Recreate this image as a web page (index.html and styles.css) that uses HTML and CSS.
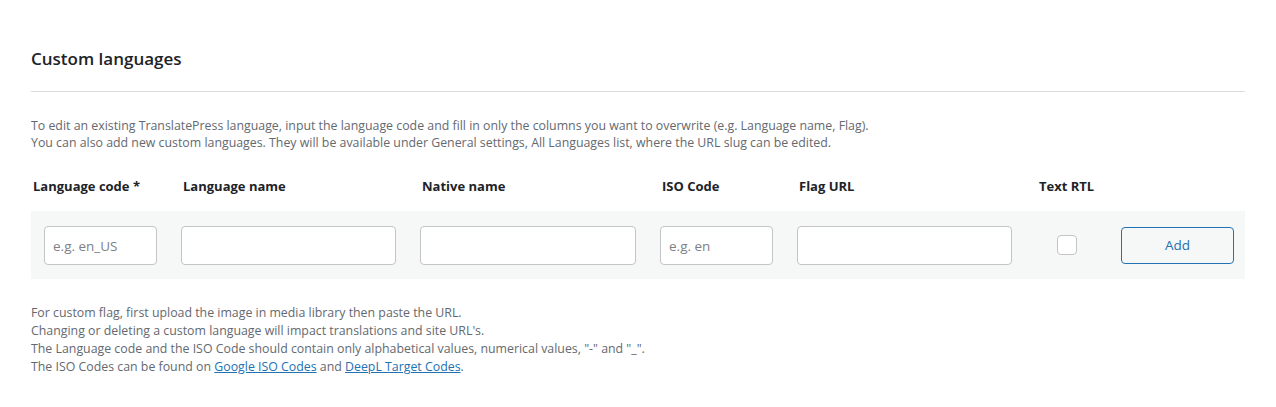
FILE: index.html
```html
<!DOCTYPE html>
<html lang="en">
<head>
<meta charset="utf-8">
<title>Custom languages</title>
<link rel="stylesheet" href="styles.css">
</head>
<body>
<div class="panel">
  <h2 class="title">Custom languages</h2>
  <hr class="divider">
  <p class="desc">To edit an existing TranslatePress language, input the language code and fill in only the columns you want to overwrite (e.g. Language name, Flag).<br>You can also add new custom languages. They will be available under General settings, All Languages list, where the URL slug can be edited.</p>
  <div class="table">
    <div class="grid head">
      <div class="th">Language code *</div>
      <div class="th">Language name</div>
      <div class="th">Native name</div>
      <div class="th">ISO Code</div>
      <div class="th">Flag URL</div>
      <div class="th th-rtl">Text RTL</div>
      <div></div>
    </div>
    <div class="grid row">
      <input class="field field-first" type="text" placeholder="e.g. en_US">
      <input class="field" type="text">
      <input class="field" type="text">
      <input class="field" type="text" placeholder="e.g. en">
      <input class="field" type="text">
      <div class="cb-cell"><span class="checkbox"></span></div>
      <button class="btn" type="button">Add</button>
    </div>
  </div>
  <p class="notes">For custom flag, first upload the image in media library then paste the URL.<br>Changing or deleting a custom language will impact translations and site URL's.<br>The Language code and the ISO Code should contain only alphabetical values, numerical values, "-" and "_".<br>The ISO Codes can be found on <a href="#">Google ISO Codes</a> and <a href="#">DeepL Target Codes</a>.</p>
</div>
</body>
</html>
```
FILE: styles.css
```css
* { box-sizing: border-box; }
html, body { margin: 0; padding: 0; background: #fff; }
body {
  font-family: "Open Sans", "Noto Sans", sans-serif;
  color: #1d2327;
  font-size: 13px;
}
.panel {
  margin: 0 31px;
  padding-top: 46px;
}
.title {
  margin: 0;
  font-size: 17px;
  font-weight: 600;
  line-height: 26px;
  color: #1d2327;
}
.divider {
  border: 0;
  border-top: 1px solid #dcdcde;
  margin: 19px 0 0;
}
.desc {
  margin: 25px 0 0;
  font-size: 12.35px;
  line-height: 17px;
  color: #646970;
}
.table { margin-top: 23px; }
.grid {
  display: grid;
  grid-template-columns: 126px 215px 216px 113px 215px 61px 113px;
  column-gap: 24px;
  align-items: center;
}
.head { height: 24px; }
.th {
  font-weight: 700;
  font-size: 13px;
  padding-left: 2px;
  color: #1d2327;
}
.th-rtl { padding-left: 3px; }
.row {
  margin-top: 13px;
  background: #f6f7f7;
  height: 68px;
}
.field {
  height: 39px;
  width: 100%;
  border: 1px solid #c3c4c7;
  border-radius: 4px;
  background: #fff;
  font-family: inherit;
  font-size: 13.5px;
  padding: 0 8px;
  color: #2c3338;
  margin-top: 1px;
}
.field::placeholder { color: #7d8085; }
.field-first { margin-left: 13px; width: 113px; }
.cb-cell { display: flex; justify-content: center; }
.checkbox {
  width: 20px;
  height: 20px;
  border: 1px solid #c3c4c7;
  border-radius: 4px;
  background: #fff;
  display: block;
}
.btn {
  height: 37px;
  width: 113px;
  border: 1px solid #2271b1;
  border-radius: 4px;
  background: transparent;
  color: #2271b1;
  font-family: inherit;
  font-size: 13.5px;
  padding: 0;
}
.notes {
  margin: 25px 0 0;
  font-size: 12.35px;
  line-height: 18px;
  color: #646970;
}
.notes a { color: #2271b1; text-decoration: underline; }
```
